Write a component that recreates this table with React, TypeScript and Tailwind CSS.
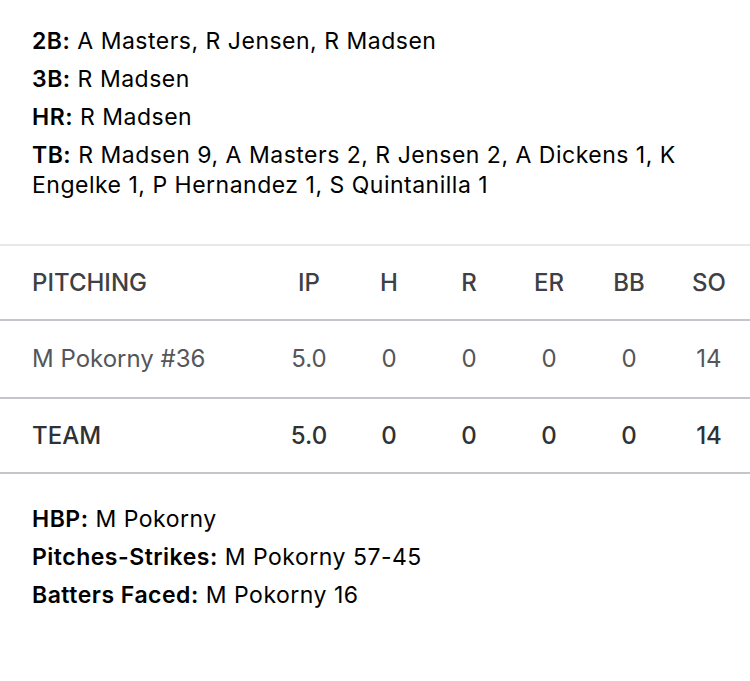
const notes = [
  { label: '2B', text: 'A Masters, R Jensen, R Madsen' },
  { label: '3B', text: 'R Madsen' },
  { label: 'HR', text: 'R Madsen' },
  {
    label: 'TB',
    text: 'R Madsen 9, A Masters 2, R Jensen 2, A Dickens 1, K Engelke 1, P Hernandez 1, S Quintanilla 1',
  },
]

const pitchNotes = [
  { label: 'HBP', text: 'M Pokorny' },
  { label: 'Pitches-Strikes', text: 'M Pokorny 57-45' },
  { label: 'Batters Faced', text: 'M Pokorny 16' },
]

const cols = ['IP', 'H', 'R', 'ER', 'BB', 'SO']

function Note({ label, text }: { label: string; text: string }) {
  return (
    <p className="text-[23px] leading-[30px] tracking-[0.5px] text-black">
      <span className="font-semibold">{label}:</span> {text}
    </p>
  )
}

function Row({
  name,
  values,
  className,
}: {
  name: string
  values: string[]
  className: string
}) {
  return (
    <div className={`flex items-center border-b-2 border-[#c3c7cc] ${className}`}>
      <div className="w-[269px] pl-8">{name}</div>
      {values.map((v, i) => (
        <div key={i} className="w-20 text-center">
          {v}
        </div>
      ))}
    </div>
  )
}

export default function App() {
  return (
    <div className="min-h-[681px] w-[750px] bg-white font-['Inter',sans-serif]">
      <div className="flex flex-col gap-[8px] px-8 pr-6 pt-[26px] pb-[44px]">
        {notes.map((n) => (
          <Note key={n.label} {...n} />
        ))}
      </div>
      <div className="border-t-2 border-[#e8e8ea] text-[24px]">
        <Row name="PITCHING" values={cols} className="h-[75px] font-medium text-[#3e4044]" />
        <Row
          name="M Pokorny #36"
          values={['5.0', '0', '0', '0', '0', '14']}
          className="h-[78px] text-[#54565a]"
        />
        <Row
          name="TEAM"
          values={['5.0', '0', '0', '0', '0', '14']}
          className="h-[75px] font-medium text-[#2f3135]"
        />
      </div>
      <div className="flex flex-col gap-[8px] px-8 pt-[30px]">
        {pitchNotes.map((n) => (
          <Note key={n.label} {...n} />
        ))}
      </div>
    </div>
  )
}
